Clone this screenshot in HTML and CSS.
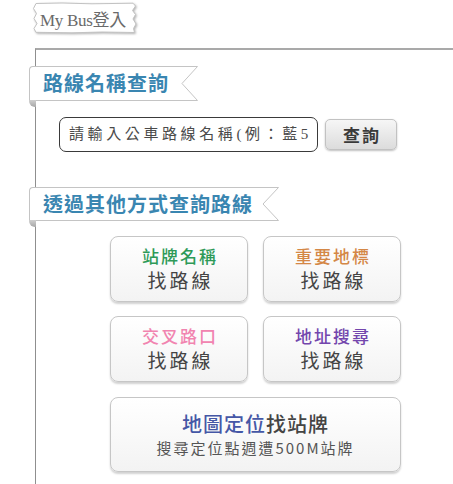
FILE: index.html
```html
<!DOCTYPE html>
<html lang="zh-Hant">
<head>
<meta charset="utf-8">
<title>My Bus</title>
<link rel="stylesheet" href="styles.css">
</head>
<body>
  <div class="login">
    <svg class="login-paper" width="107" height="33" viewBox="0 0 107 33"><path d="M4 1.5L30 1L60 1.8L101 1.2L103.5 4L100.5 8.5L103.5 12.5L101 17L104 22L101.5 26.5L102.5 30.5L70 30L40 30.8L4 30.3L2 26.5L5 21.5L2 16.5L4.5 11.5L1.5 6.5Z" fill="#fff" stroke="#c2c2c2" stroke-width="1"/></svg>
    <span class="login-text">My Bus登入</span>
  </div>
  <div class="panel">
    <div class="ribbon">
      <span class="ribbon-text">路線名稱查詢</span>
      <svg class="ribbon-tail" width="22" height="35" viewBox="0 0 22 35"><path d="M0 0.5H21.5L6 17.5L21.5 34.5H0" fill="#fff" stroke="#c4c4c4"/></svg>
    </div>
    <div class="search-row">
      <input class="search-input" type="text" placeholder="請輸入公車路線名稱(例：藍5)">
      <button class="search-btn" type="button">查詢</button>
    </div>
    <div class="ribbon ribbon-second">
      <span class="ribbon-text">透過其他方式查詢路線</span>
      <svg class="ribbon-tail" width="22" height="34" viewBox="0 0 22 34"><path d="M0 0.5H21.5L6 17L21.5 33.5H0" fill="#fff" stroke="#c4c4c4"/></svg>
    </div>
    <div class="grid">
      <a class="card"><span class="card-title green">站牌名稱</span><span class="card-sub">找路線</span></a>
      <a class="card"><span class="card-title orange">重要地標</span><span class="card-sub">找路線</span></a>
      <a class="card"><span class="card-title pink">交叉路口</span><span class="card-sub">找路線</span></a>
      <a class="card"><span class="card-title purple">地址搜尋</span><span class="card-sub">找路線</span></a>
      <a class="card card-wide"><span class="wide-title"><span class="blue">地圖定位</span>找站牌</span><span class="wide-sub">搜尋定位點週遭500M站牌</span></a>
    </div>
  </div>
</body>
</html>
```

FILE: styles.css
```css
html, body {
  margin: 0;
  padding: 0;
  background: #fff;
}
body {
  width: 453px;
  height: 484px;
  overflow: hidden;
  font-family: "Noto Sans CJK TC", "Noto Sans", sans-serif;
}
.login {
  position: relative;
  margin: 2px 0 0 32px;
  width: 107px;
  height: 33px;
  display: flex;
  align-items: center;
  padding-left: 8px;
  box-sizing: border-box;
}
.login-paper {
  position: absolute;
  left: 0;
  top: 0;
  filter: drop-shadow(1px 1.5px 1px rgba(0, 0, 0, 0.3));
}
.login-text {
  position: relative;
  font-family: "Liberation Serif", "Noto Sans CJK TC", serif;
  font-size: 17px;
  color: #6a6a6a;
  letter-spacing: -0.3px;
}
.panel {
  margin: 13px 0 0 35px;
  border-top: 2px solid #a9a9a9;
  border-left: 1px solid #8f8f8f;
  height: 460px;
  padding-top: 16px;
  box-sizing: border-box;
}
.ribbon {
  position: relative;
  display: flex;
  margin-left: -7px;
  height: 35px;
}
.ribbon::after {
  content: "";
  position: absolute;
  left: 0;
  top: 34px;
  width: 7px;
  height: 7px;
  background: linear-gradient(#cfcfcf, #a8a8a8);
  border-radius: 0 0 0 6px;
  clip-path: polygon(0 0, 100% 0, 100% 100%, 40% 100%, 0 60%);
}
.ribbon-text {
  display: block;
  height: 35px;
  box-sizing: border-box;
  border: 1px solid #c4c4c4;
  border-right: none;
  border-radius: 4px 0 0 0;
  background: #fff;
  padding: 0 7px 0 13px;
  font-size: 20px;
  font-weight: 700;
  line-height: 32px;
  color: #3a86b1;
  letter-spacing: 1px;
}
.ribbon-tail {
  display: block;
  flex: none;
}
.ribbon-second {
  margin-top: 35px;
  height: 34px;
}
.ribbon-second .ribbon-text {
  height: 34px;
  line-height: 31px;
  padding-right: 4px;
}
.ribbon-second::after {
  top: 33px;
}
.search-row {
  display: flex;
  align-items: center;
  gap: 7px;
  margin: 16px 0 0 23px;
}
.search-input {
  width: 259px;
  height: 35px;
  box-sizing: border-box;
  border: 1px solid #3a3a3a;
  border-radius: 7px;
  padding: 0 8px 0 9px;
  font-family: "Liberation Serif", "Noto Sans CJK TC", serif;
  font-size: 15px;
  letter-spacing: 3.6px;
  color: #444;
  background: #fff;
  outline: none;
}
.search-input::placeholder {
  color: #4a4a4a;
  opacity: 1;
}
.search-btn {
  width: 72px;
  height: 31px;
  box-sizing: border-box;
  border: 1px solid #c2c2c2;
  border-radius: 5px;
  background: linear-gradient(#f6f6f6, #dcdcdc);
  box-shadow: 0 1px 2px rgba(0, 0, 0, 0.25);
  font-family: "Noto Sans CJK TC", sans-serif;
  font-size: 17px;
  font-weight: 700;
  letter-spacing: 2px;
  color: #3a3a3a;
  padding: 0 0 0 2px;
  line-height: 29px;
}
.grid {
  display: grid;
  grid-template-columns: 138px 138px;
  column-gap: 15px;
  row-gap: 14px;
  margin: 15px 0 0 74px;
  width: 291px;
}
.card {
  height: 66px;
  box-sizing: border-box;
  border: 1px solid #c6c6c6;
  border-radius: 8px;
  background: linear-gradient(#ffffff, #f3f3f3);
  box-shadow: 0 2px 2px rgba(0, 0, 0, 0.18);
  display: flex;
  flex-direction: column;
  align-items: center;
  justify-content: center;
  text-decoration: none;
}
.card-title {
  font-size: 17px;
  line-height: 22px;
  letter-spacing: 2px;
  margin-right: -2px;
  font-weight: 500;
}
.card-sub {
  font-size: 19px;
  line-height: 26px;
  letter-spacing: 3px;
  margin-right: -3px;
  color: #444;
}
.green { color: #2e9a58; }
.orange { color: #d48746; }
.pink { color: #f184b0; }
.purple { color: #7346ad; }
.blue { color: #4557a6; }
.card-wide {
  grid-column: 1 / 3;
  height: 75px;
  margin-top: 1px;
}
.wide-title {
  font-size: 20px;
  line-height: 26px;
  letter-spacing: 1px;
  color: #444;
  font-weight: 500;
}
.wide-sub {
  font-size: 15px;
  line-height: 22px;
  letter-spacing: 2px;
  color: #555;
}
```
